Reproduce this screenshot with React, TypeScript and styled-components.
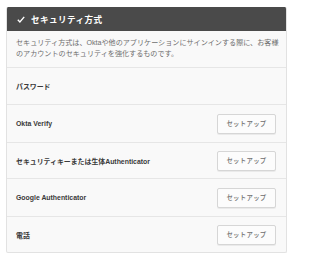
import React from "react";
import styled, { createGlobalStyle } from "styled-components";

const Global = createGlobalStyle`
  html, body { margin: 0; padding: 0; background: #ffffff; }
  body { font-family: "Liberation Sans", "Noto Sans CJK JP", sans-serif; }
`;

const Page = styled.div`
  padding: 7px 8px 8px 6px;
`;

const Card = styled.section`
  width: 281px;
  box-sizing: border-box;
  background: #f9f9f9;
  border: 1px solid #e2e2e2;
  border-top: none;
  border-radius: 2px;
  overflow: hidden;
`;

const Header = styled.header`
  height: 24px;
  background: #4a4a4a;
  display: flex;
  align-items: center;
  gap: 6px;
  padding-left: 10px;
  color: #ffffff;
  font-family: "Noto Sans CJK JP", sans-serif;
  font-weight: 700;
  font-size: 8.6px;
  letter-spacing: 0.4px;
`;

const Description = styled.p`
  margin: 0;
  padding: 7px 3px 8px 9px;
  font-family: "Liberation Sans", "Noto Sans CJK JP", sans-serif;
  font-size: 7.1px;
  line-height: 11px;
  color: #6e6e6e;
  height: 36px;
  box-sizing: border-box;
`;

const Row = styled.div<{ $h: number }>`
  display: flex;
  align-items: center;
  justify-content: space-between;
  height: ${(p) => p.$h}px;
  box-sizing: border-box;
  border-top: 1px solid #e6e6e6;
  padding: 0 10px 0 9px;
`;

const Label = styled.span`
  font-family: "Liberation Sans", "Noto Sans CJK JP", sans-serif;
  font-weight: 700;
  font-size: 6.9px;
  color: #3a3a3a;
`;

const SetupButton = styled.button`
  width: 59px;
  height: 20px;
  box-sizing: border-box;
  border: 1px solid #d6d6d6;
  border-radius: 2px;
  background: #fcfcfc;
  box-shadow: 0 1px 0 rgba(0, 0, 0, 0.06);
  font-family: "Noto Sans CJK JP", sans-serif;
  font-size: 6.4px;
  font-weight: 500;
  color: #6e6e6e;
  letter-spacing: 0.3px;
  padding: 0;
  display: flex;
  align-items: center;
  justify-content: center;
`;

const Check = () => (
  <svg width="8" height="7" viewBox="0 0 8 7">
    <path d="M0.8 3.8 L2.9 5.9 L7.2 0.9" fill="none" stroke="#fff" strokeWidth="1.4" />
  </svg>
);

const rows: { label: string; button: boolean; h: number }[] = [
  { label: "パスワード", button: false, h: 37 },
  { label: "Okta Verify", button: true, h: 38 },
  { label: "セキュリティキーまたは生体Authenticator", button: true, h: 36 },
  { label: "Google Authenticator", button: true, h: 38 },
  { label: "電話", button: true, h: 36 },
];

export default function App() {
  return (
    <Page>
      <Global />
      <Card>
        <Header>
          <Check />
          <span>セキュリティ方式</span>
        </Header>
        <Description>
          セキュリティ方式は、Oktaや他のアプリケーションにサインインする際に、お客様のアカウントのセキュリティを強化するものです。
        </Description>
        {rows.map((r) => (
          <Row key={r.label} $h={r.h}>
            <Label>{r.label}</Label>
            {r.button && <SetupButton>セットアップ</SetupButton>}
          </Row>
        ))}
      </Card>
    </Page>
  );
}
